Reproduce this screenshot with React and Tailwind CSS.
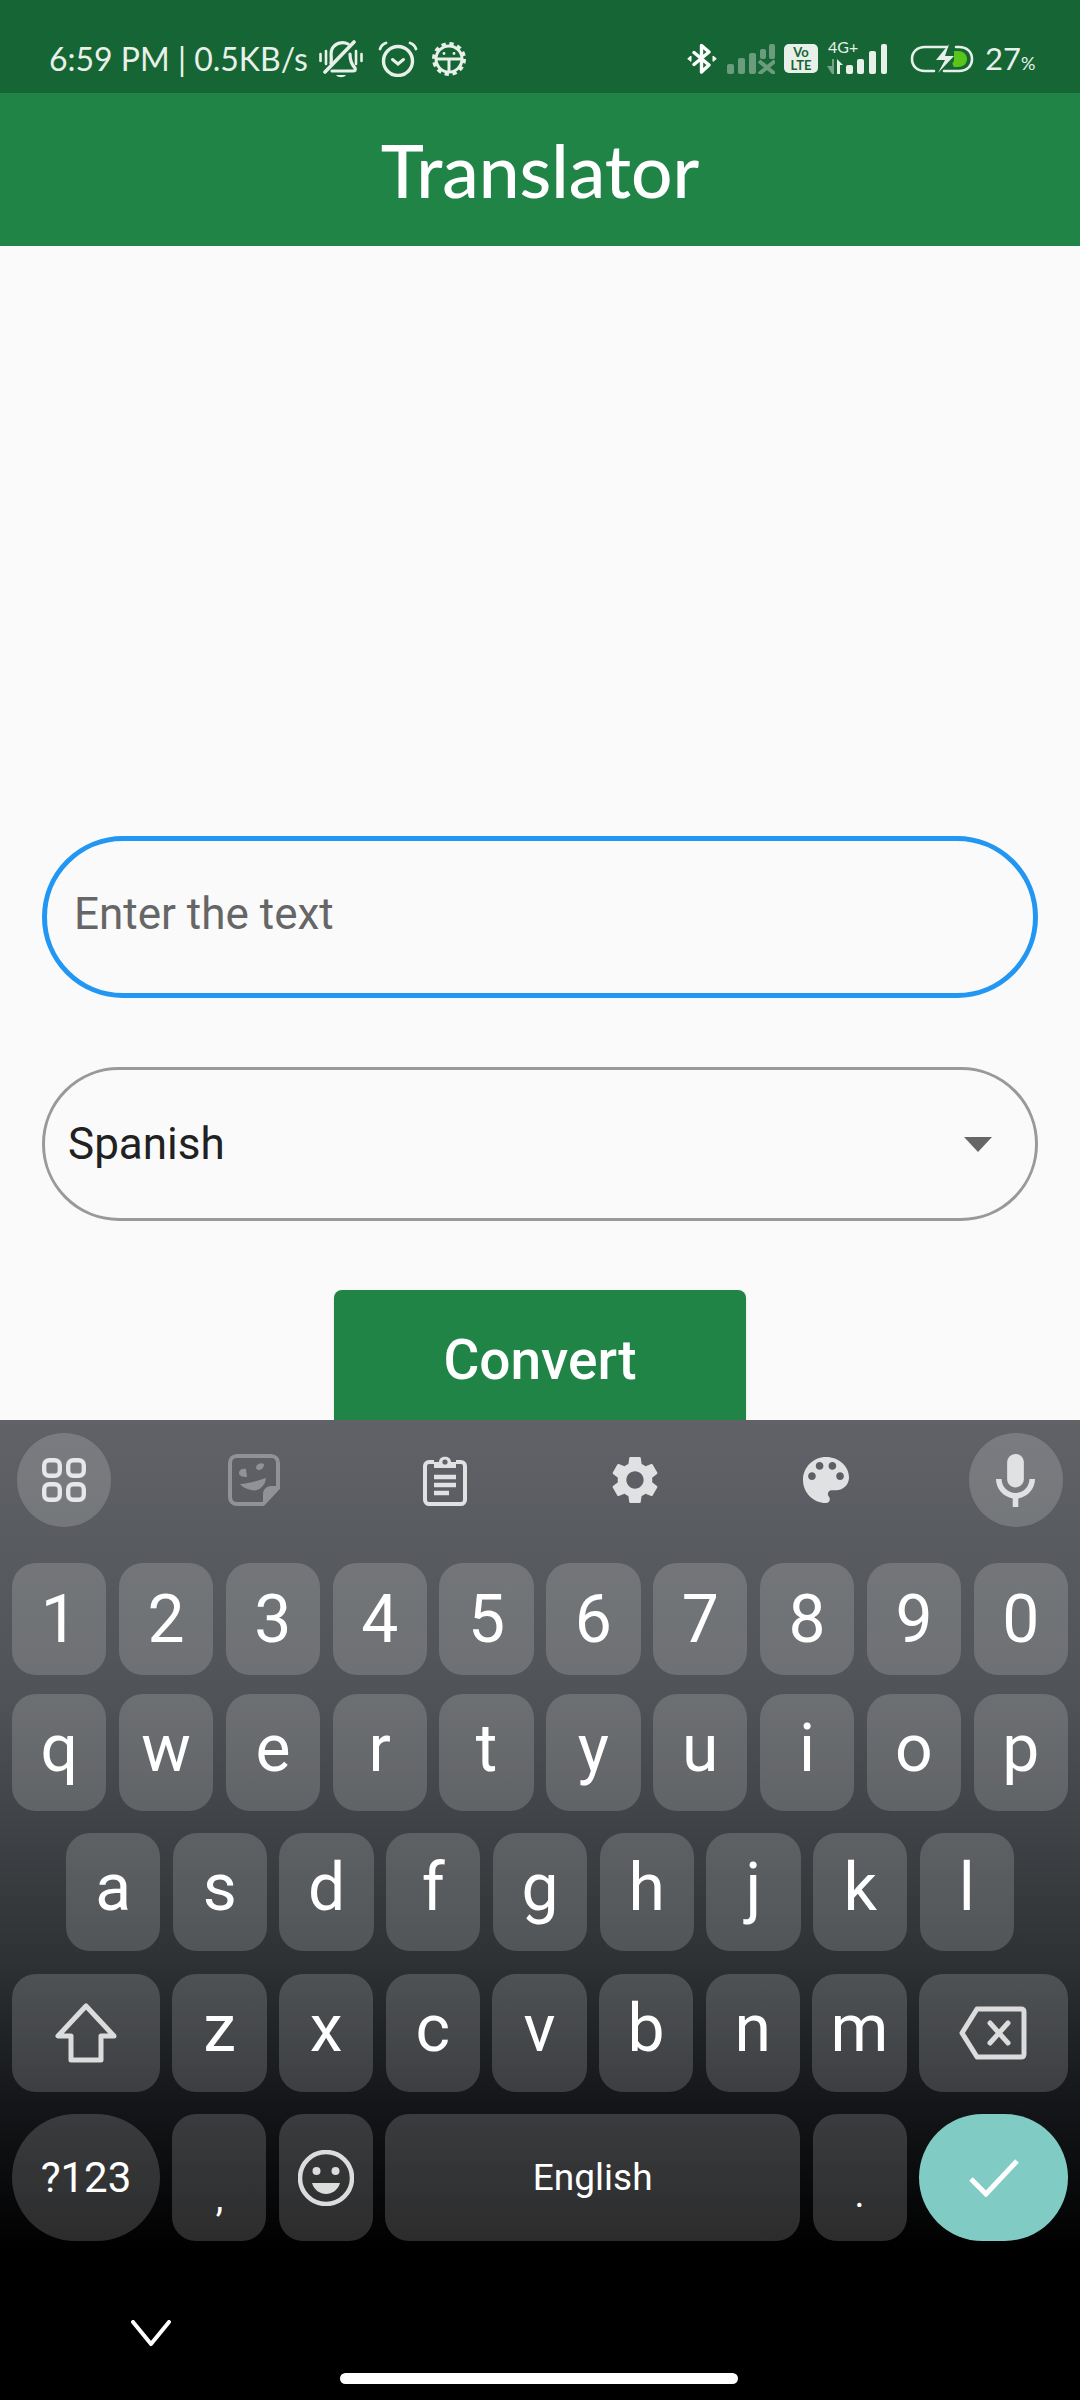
import React from 'react';

const digits = ['1', '2', '3', '4', '5', '6', '7', '8', '9', '0'];
const topRow = ['q', 'w', 'e', 'r', 't', 'y', 'u', 'i', 'o', 'p'];
const midRow = ['a', 's', 'd', 'f', 'g', 'h', 'j', 'k', 'l'];
const lowRow = ['z', 'x', 'c', 'v', 'b', 'n', 'm'];

const Key = ({ children, className = '', size = 'text-[66px]' }) => (
    <div className={`flex items-center justify-center rounded-[24px] bg-white/[0.17] text-white font-['Roboto',sans-serif] leading-none ${size} ${className}`}>
        {children}
    </div>
);

const Letter = ({ children }) => <span className="pb-2">{children}</span>;

const BellOff = () => (
    <svg width="44" height="38" viewBox="0 0 44 38" fill="none" stroke="#e8f0ea" strokeWidth="3.2" strokeLinecap="round">
        <path d="M1.5 14v7M7 11v13M37 11v13M42.5 14v7" strokeWidth="2.6" />
        <path d="M12 23c1-5-1-10 1-14 3-6 11-8 16-5" />
        <path d="M6 32 35 2" strokeWidth="3.6" />
        <path d="M31 14c0 7 2 11 5 14 1 2 0 3-2 3H13" />
        <path d="M17 35h10c-2 3-8 3-10 0z" fill="#e8f0ea" stroke="none" />
    </svg>
);

const Alarm = () => (
    <svg width="40" height="36" viewBox="0 0 40 36" fill="none" stroke="#e8f0ea" strokeLinecap="round">
        <circle cx="20" cy="20" r="14.5" strokeWidth="3.4" />
        <path d="M14.5 18.5 20 23l5.5-4.5" strokeWidth="3" />
        <path d="M2 8c1-3 3-5 6-6M38 8c-1-3-3-5-6-6" strokeWidth="2.8" />
    </svg>
);

const AndroidGear = () => (
    <svg width="34" height="34" viewBox="0 0 34 34" fill="none" stroke="#e8f0ea">
        <circle cx="17" cy="17" r="13" strokeWidth="3" />
        <circle cx="17" cy="17" r="15" strokeWidth="4" strokeDasharray="4.2 3.65" />
        <path d="M4 17h26M17 17v13" strokeWidth="3" />
        <circle cx="12" cy="11.5" r="1.4" fill="#e8f0ea" stroke="none" />
        <circle cx="22" cy="11.5" r="1.4" fill="#e8f0ea" stroke="none" />
    </svg>
);

const Bluetooth = () => (
    <svg width="30" height="31" viewBox="0 0 30 31" fill="none" stroke="#ffffff" strokeWidth="3.4" strokeLinejoin="round" strokeLinecap="round">
        <path d="M7 9.5 22 22l-7.5 7V2.5L22 9 7 21.5" />
        <path d="M1 15.5 4 13v5zM29 15.5 26 13v5z" fill="#fff" strokeWidth="1" />
    </svg>
);

const SignalOff = () => (
    <svg width="48" height="30" viewBox="0 0 48 30" fill="#e8f0ea" opacity="0.4">
        <rect x="0" y="20" width="7" height="10" rx="2" />
        <rect x="11" y="14" width="7" height="16" rx="2" />
        <rect x="22" y="9" width="7" height="21" rx="2" />
        <rect x="33" y="5" width="6" height="10" rx="2" />
        <rect x="42" y="0" width="6" height="15" rx="2" />
        <path d="m32 17 16 13M48 17 32 30" stroke="#e8f0ea" strokeWidth="4" />
    </svg>
);

const Signal4G = () => (
    <svg width="66" height="30" viewBox="0 0 66 30" fill="#e8f0ea">
        <path d="M0 22h5v-7h2v15H5z" opacity="0.45" />
        <path d="M10 15l6 6h-3v9h-3z" />
        <rect x="19" y="21" width="7" height="9" rx="2" />
        <rect x="30" y="15" width="7" height="15" rx="2" />
        <rect x="42" y="7" width="7" height="23" rx="2" />
        <rect x="54" y="0" width="6" height="30" rx="2" />
    </svg>
);

const Battery = () => (
    <svg width="64" height="30" viewBox="0 0 64 30" fill="none">
        <path d="M24 27H15C7 27 2 22 2 15S7 3 15 3h22M46 3h3c8 0 13 5 13 12s-5 12-13 12H34" stroke="#e8f0ea" strokeWidth="2.6" strokeLinecap="round" />
        <path d="M44 7h4c5 0 9 3 9 8s-4 8-9 8h-4c-2-3-2-4 0-6z" fill="#5ac41a" />
        <path d="M39 0 26 16h9l-7 13 16-17h-9z" fill="#e8f0ea" />
    </svg>
);

const Sticker = () => (
    <svg width="52" height="52" viewBox="0 0 52 52" fill="none">
        <path d="M9 2h34c4 0 7 3 7 7v25L35 50H9c-4 0-7-3-7-7V9c0-4 3-7 7-7z" stroke="#909295" strokeWidth="4" />
        <path d="M35 49V40c0-5 4-8 8-8h7z" fill="#909295" />
        <path d="M12 30c8 0 16-3 26-6-1 9-8 14-15 12-5-1-9-3-11-6z" fill="#909295" />
        <path d="M11 19c0-3 3-5 7-4l1 8c-4 0-8-1-8-4zM28 13c1-3 5-5 8-3 0 3-2 6-5 6-2 0-3-1-3-3z" fill="#909295" />
    </svg>
);

const Clipboard = () => (
    <svg width="44" height="52" viewBox="0 0 44 52" fill="none" stroke="#e0e1e3" strokeWidth="4">
        <path d="M11 8H6c-2 0-4 2-4 4v34c0 2 2 4 4 4h32c2 0 4-2 4-4V12c0-2-2-4-4-4h-5" />
        <path d="M11 14V8h5c0-7 12-7 12 0h5v6z" fill="#e0e1e3" stroke="none" />
        <circle cx="22" cy="8" r="2.6" fill="#606267" stroke="none" />
        <path d="M11 23h22M11 31h22M11 39h15" strokeWidth="4.5" />
    </svg>
);

const Gear = () => (
    <svg width="46" height="48" viewBox="2.5 2 19 20" fill="#e0e1e3">
        <path d="M19.14 12.94c.04-.3.06-.61.06-.94 0-.32-.02-.64-.07-.94l2.03-1.58c.18-.14.23-.41.12-.61l-1.92-3.32c-.12-.22-.37-.29-.59-.22l-2.39.96c-.5-.38-1.03-.7-1.62-.94l-.36-2.54c-.04-.24-.24-.41-.48-.41h-3.84c-.24 0-.43.17-.47.41l-.36 2.54c-.59.24-1.13.57-1.62.94l-2.39-.96c-.22-.08-.47 0-.59.22L2.74 8.87c-.12.21-.08.47.12.61l2.03 1.58c-.05.3-.09.63-.09.94s.02.64.07.94l-2.03 1.58c-.18.14-.23.41-.12.61l1.92 3.32c.12.22.37.29.59.22l2.39-.96c.5.38 1.03.7 1.62.94l.36 2.54c.05.24.24.41.48.41h3.84c.24 0 .44-.17.47-.41l.36-2.54c.59-.24 1.13-.56 1.62-.94l2.39.96c.22.08.47 0 .59-.22l1.92-3.32c.12-.22.07-.47-.12-.61l-2.01-1.58zM12 15.6c-1.98 0-3.6-1.62-3.6-3.6s1.62-3.6 3.6-3.6 3.6 1.62 3.6 3.6-1.62 3.6-3.6 3.6z" />
    </svg>
);

const Palette = () => (
    <svg width="46" height="46" viewBox="3 3 18 18" fill="#e0e1e3">
        <path d="M12 3c-4.97 0-9 4.03-9 9s4.03 9 9 9c.83 0 1.5-.67 1.5-1.5 0-.39-.15-.74-.39-1.01-.23-.26-.38-.61-.38-.99 0-.83.67-1.5 1.5-1.5H16c2.76 0 5-2.24 5-5 0-4.42-4.03-8-9-8zm-5.5 9c-.83 0-1.5-.67-1.5-1.5S5.67 9 6.5 9 8 9.67 8 10.5 7.33 12 6.5 12zm3-4C8.67 8 8 7.33 8 6.5S8.67 5 9.5 5s1.5.67 1.5 1.5S10.33 8 9.5 8zm5 0c-.83 0-1.5-.67-1.5-1.5S13.67 5 14.5 5s1.5.67 1.5 1.5S15.33 8 14.5 8zm3 4c-.83 0-1.5-.67-1.5-1.5S16.67 9 17.5 9s1.5.67 1.5 1.5-.67 1.5-1.5 1.5z" />
    </svg>
);

const Mic = () => (
    <svg width="39" height="53" viewBox="5 2 14 19" fill="#e0e1e3">
        <path d="M12 14c1.66 0 3-1.34 3-3V5c0-1.66-1.34-3-3-3S9 3.34 9 5v6c0 1.66 1.34 3 3 3z" />
        <path d="M17 11c0 2.76-2.24 5-5 5s-5-2.24-5-5H5c0 3.53 2.61 6.43 6 6.92V21h2v-3.08c3.39-.49 6-3.39 6-6.92h-2z" />
    </svg>
);

const Grid = () => (
    <svg width="44" height="44" viewBox="0 0 44 44" fill="none" stroke="#e6e7e8" strokeWidth="4.4">
        <rect x="2.2" y="2.2" width="15.6" height="15.6" rx="5" />
        <rect x="26.2" y="2.2" width="15.6" height="15.6" rx="5" />
        <rect x="2.2" y="26.2" width="15.6" height="15.6" rx="5" />
        <rect x="26.2" y="26.2" width="15.6" height="15.6" rx="5" />
    </svg>
);

const Shift = () => (
    <svg width="62" height="60" viewBox="0 0 62 60" fill="none" stroke="#dcdcdc" strokeWidth="5" strokeLinejoin="round">
        <path d="M31 3 3 33h13v24h30V33h13z" />
    </svg>
);

const Backspace = () => (
    <svg width="68" height="54" viewBox="0 0 68 54" fill="none" stroke="#dcdcdc" strokeWidth="5" strokeLinejoin="round">
        <path d="M18 3h44c2 0 3 1 3 3v42c0 2-1 3-3 3H18L3 27z" />
        <path d="m31 17 18 20M49 17 31 37" strokeLinecap="round" />
    </svg>
);

const Smile = () => (
    <svg width="56" height="56" viewBox="0 0 56 56" fill="none">
        <circle cx="28" cy="28" r="26" stroke="#dcdcdc" strokeWidth="4.5" />
        <circle cx="18.5" cy="21" r="4" fill="#dcdcdc" />
        <circle cx="37.5" cy="21" r="4" fill="#dcdcdc" />
        <path d="M14 33h28c-2 7-8 11-14 11s-12-4-14-11z" fill="#dcdcdc" />
    </svg>
);

export default function App() {
    return (
        <div className="flex h-[2400px] w-[1080px] flex-col overflow-hidden bg-[#fafafa]">
            {/* Status bar */}
            <div className="flex h-[93px] shrink-0 items-center bg-[#166534] pl-[49px] pt-[24px] text-[#e8f0ea] font-['Lato',sans-serif]">
                <span className="w-[262px] whitespace-nowrap text-[32px] leading-none">6:59 PM | 0.5KB/s</span>
                <span className="ml-[8px] flex"><BellOff /></span>
                <span className="ml-[15px] flex"><Alarm /></span>
                <span className="ml-[14px] flex"><AndroidGear /></span>
                <span className="ml-[221px] flex"><Bluetooth /></span>
                <span className="ml-[10px] flex"><SignalOff /></span>
                <span className="ml-[9px] flex h-[29px] w-[34px] flex-col items-center justify-center rounded-[5px] bg-[#e8f0ea] text-[13px] font-bold leading-[13px] text-[#166534]">
                    <span>Vo</span>
                    <span>LTE</span>
                </span>
                <span className="relative ml-[9px] flex">
                    <span className="absolute left-[1px] top-[-5px] text-[16px] leading-none">4G+</span>
                    <Signal4G />
                </span>
                <span className="ml-[17px] flex"><Battery /></span>
                <span className="ml-[11px] whitespace-nowrap text-[31px] leading-none">27<span className="text-[18px]">%</span></span>
            </div>

            {/* App bar */}
            <div className="flex h-[153px] shrink-0 items-center justify-center bg-[#1f8445] pt-[2px]">
                <h1 className="font-['Lato',sans-serif] text-[73px] font-medium leading-none text-white">Translator</h1>
            </div>

            {/* Form, the keyboard cuts the button off */}
            <div className="flex min-h-0 flex-1 flex-col items-center overflow-hidden px-[42px] pt-[590px] font-['Roboto',sans-serif]">
                <input
                    readOnly
                    placeholder="Enter the text"
                    className="h-[162px] w-full shrink-0 rounded-[81px] border-[5px] border-[#2196f3] bg-transparent pb-[6px] pl-[27px] text-[44px] outline-none placeholder:text-[#666666]"
                />
                <div className="mt-[69px] flex h-[154px] w-full shrink-0 items-center justify-between rounded-[77px] border-[3px] border-[#999999] pl-[23px] pr-[43px]">
                    <span className="text-[44px] leading-none text-[#212121]">Spanish</span>
                    <svg width="28" height="15" viewBox="0 0 28 15" fill="#666666"><path d="M0 0h28L14 15z" /></svg>
                </div>
                <button className="mt-[69px] flex h-[160px] w-[412px] shrink-0 justify-center rounded-[8px] bg-[#1f8445] pt-[43px] text-[55px] font-medium leading-none text-white shadow">
                    Convert
                </button>
            </div>

            {/* Keyboard */}
            <div className="h-[980px] shrink-0 bg-[linear-gradient(180deg,#606267_0%,#505357_28%,#2e3235_55%,#15171a_69%,#000000_85%)] px-[12px] pt-[13px]">
                <div className="flex h-[94px] justify-between px-[5px]">
                    <div className="flex w-[94px] items-center justify-center rounded-full bg-white/[0.17]"><Grid /></div>
                    <div className="flex w-[94px] items-center justify-center"><Sticker /></div>
                    <div className="flex w-[94px] items-center justify-center"><Clipboard /></div>
                    <div className="flex w-[94px] items-center justify-center"><Gear /></div>
                    <div className="flex w-[94px] items-center justify-center"><Palette /></div>
                    <div className="flex w-[94px] items-center justify-center rounded-full bg-white/[0.17]"><Mic /></div>
                </div>

                <div className="mt-[36px] grid h-[112px] grid-cols-10 gap-[12.4px]">
                    {digits.map((d) => <Key key={d}><span className="pt-[2px]">{d}</span></Key>)}
                </div>

                <div className="mt-[19px] grid h-[117px] grid-cols-10 gap-[12.4px]">
                    {topRow.map((k) => <Key key={k}><Letter>{k}</Letter></Key>)}
                </div>

                <div className="mt-[22px] grid h-[118px] grid-cols-9 gap-[12.4px] px-[54px]">
                    {midRow.map((k) => <Key key={k}><Letter>{k}</Letter></Key>)}
                </div>

                <div className="mt-[23px] flex h-[118px] gap-[12.4px]">
                    <Key className="w-[148px] shrink-0"><Shift /></Key>
                    {lowRow.map((k) => <Key key={k} className="flex-1"><Letter>{k}</Letter></Key>)}
                    <Key className="w-[149px] shrink-0"><Backspace /></Key>
                </div>

                <div className="mt-[22px] flex h-[127px] gap-[12.4px]">
                    <Key className="w-[148px] shrink-0 rounded-full" size="text-[42px]">?123</Key>
                    <Key className="w-[94px] shrink-0 items-end pb-[24px]" size="text-[38px]">,</Key>
                    <Key className="w-[94px] shrink-0"><Smile /></Key>
                    <Key className="flex-1" size="text-[37px]">English</Key>
                    <Key className="w-[94px] shrink-0 items-end pb-[28px]" size="text-[38px]">.</Key>
                    <div className="flex w-[149px] shrink-0 items-center justify-center rounded-full bg-[#80cbc4]">
                        <svg width="50" height="38" viewBox="0 0 50 38" fill="none" stroke="#ffffff" strokeWidth="5"><path d="M2 20 17 35 48 2" /></svg>
                    </div>
                </div>

                {/* Nav bar */}
                <div className="relative h-[159px]">
                    <svg className="absolute left-[119px] top-[79px]" width="40" height="26" viewBox="0 0 40 26" fill="none" stroke="#ffffff" strokeWidth="4" strokeLinecap="round" strokeLinejoin="round"><path d="M2 2 20 24 38 2" /></svg>
                    <div className="absolute left-[328px] top-[132px] h-[11px] w-[398px] rounded-full bg-white" />
                </div>
            </div>
        </div>
    );
}
